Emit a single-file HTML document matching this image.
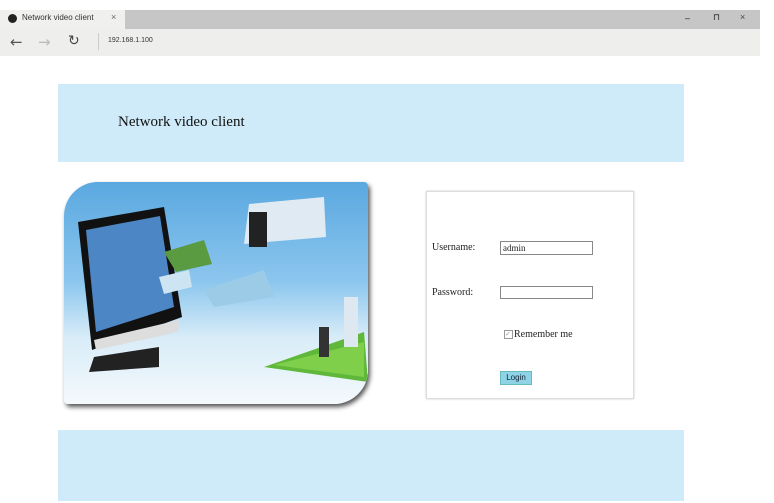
<!DOCTYPE html>
<html><head><style>
body{margin:0;width:774px;height:503px;background:#fff;position:relative;overflow:hidden;font-family:"Liberation Serif",serif}
.abs{position:absolute}
</style></head><body>
<div class="abs" style="left:0;top:10px;width:760px;height:19px;background:#c6c6c6"></div>
<div class="abs" style="left:0;top:10px;width:125px;height:19px;background:#f0f0ee"></div>
<div class="abs" style="left:8px;top:14px;width:9px;height:9px;border-radius:50%;background:#222"></div>
<div class="abs" style="left:22px;top:13px;font:8px 'Liberation Sans',sans-serif;color:#333">Network video client</div>
<div class="abs" style="left:111px;top:12px;font:9px 'Liberation Sans',sans-serif;color:#666">×</div>
<div class="abs" style="left:685px;top:13px;font:9px 'Liberation Sans',sans-serif;color:#222">–</div>
<div class="abs" style="left:713px;top:12px;font:9px 'Liberation Sans',sans-serif;color:#222">⊓</div>
<div class="abs" style="left:740px;top:12px;font:9px 'Liberation Sans',sans-serif;color:#444">×</div>
<div class="abs" style="left:0;top:29px;width:760px;height:27px;background:#eeeeec"></div>
<div class="abs" style="left:10px;top:33px;font:15px 'DejaVu Sans',sans-serif;color:#555">←</div>
<div class="abs" style="left:38px;top:33px;font:15px 'DejaVu Sans',sans-serif;color:#bbb">→</div>
<div class="abs" style="left:68px;top:33px;font:14px 'DejaVu Sans',sans-serif;color:#444">↻</div>
<div class="abs" style="left:98px;top:33px;width:1px;height:17px;background:#ccc"></div>
<div class="abs" style="left:108px;top:37px;font:7px 'Liberation Sans',sans-serif;color:#333">192.168.1.100</div>

<div class="abs" style="left:58px;top:84px;width:626px;height:78px;background:#cfeaf8"></div>
<div class="abs" style="left:118px;top:114px;font-size:15px;color:#111">Network video client</div>

<div class="abs" style="left:64px;top:182px;width:304px;height:222px;border-radius:34px 4px 34px 4px;box-shadow:2px 3px 5px #555;overflow:hidden;background:linear-gradient(#5aa8e0 0%,#8cc6ee 45%,#d8ecf8 70%,#f4f9fc 100%)">
<svg width="304" height="222" style="position:absolute;left:0;top:0">
<polygon points="200,185 300,150 304,200" fill="#5fb83a"/>
<polygon points="210,183 300,160 300,195" fill="#7fcf4a"/>
<rect x="255" y="145" width="10" height="30" fill="#333"/>
<rect x="280" y="115" width="14" height="50" fill="#dde8f0"/>
<polygon points="14,40 100,25 118,135 28,168" fill="#111"/>
<polygon points="22,48 96,34 110,125 32,150" fill="#4d86c4"/>
<polygon points="30,158 115,138 114,150 32,168" fill="#ddd"/>
<polygon points="30,175 95,165 95,185 25,190" fill="#222"/>
<polygon points="185,22 260,15 262,55 180,62" fill="#dfeaf2"/>
<rect x="185" y="30" width="18" height="35" fill="#222"/>
<polygon points="140,108 200,88 210,115 150,125" fill="#9ccbe8"/>
<polygon points="100,70 140,58 148,82 112,90" fill="#5a9a40"/>
<polygon points="95,95 125,88 128,105 100,112" fill="#cde4f2"/>
</svg>
</div>

<div class="abs" style="left:426px;top:191px;width:206px;height:206px;border:1px solid #ddd;box-shadow:0 0 2px #ccc;background:#fff"></div>
<div class="abs" style="left:432px;top:242px;font-size:10px;color:#222">Username:</div>
<div class="abs" style="left:500px;top:241px;width:89px;height:12px;border:1px solid #888;font-size:9px;line-height:12px;padding-left:2px;color:#222">admin</div>
<div class="abs" style="left:432px;top:287px;font-size:10px;color:#222">Password:</div>
<div class="abs" style="left:500px;top:286px;width:91px;height:11px;border:1px solid #888"></div>
<div class="abs" style="left:504px;top:330px;width:7px;height:7px;border:1px solid #999;font-size:7px;line-height:7px;color:#999">✓</div>
<div class="abs" style="left:514px;top:329px;font-size:10px;color:#222">Remember me</div>
<div class="abs" style="left:500px;top:371px;width:30px;height:12px;background:#8fd3e6;border:1px solid #6bb;font:8px 'Liberation Sans',sans-serif;line-height:12px;text-align:center;color:#123">Login</div>

<div class="abs" style="left:58px;top:430px;width:626px;height:71px;background:#cfeaf8"></div>
</body></html>
